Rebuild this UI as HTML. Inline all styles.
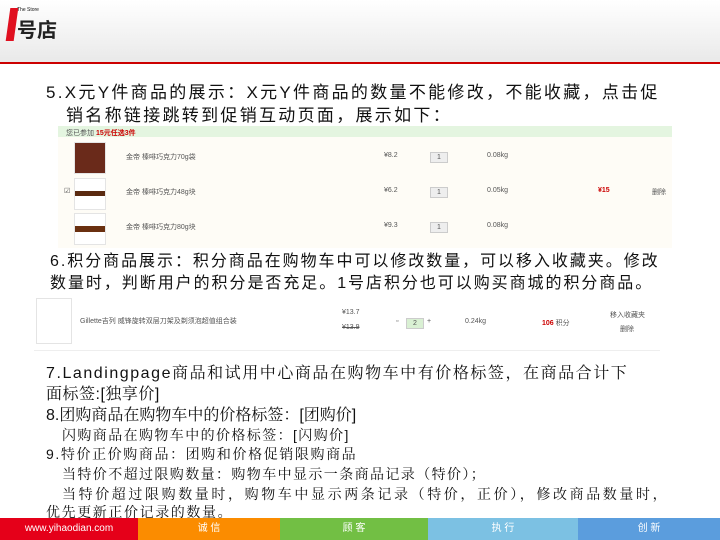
<html><head><style>
body{margin:0;width:720px;height:540px;position:relative;background:#fff;font-family:"Liberation Sans","Noto Sans CJK SC",sans-serif;overflow:hidden}
.a{position:absolute;white-space:nowrap;color:#111}
.sf{font-family:"Liberation Sans","Noto Serif CJK SC",serif}
.s{font-size:7px;color:#555;position:absolute;white-space:nowrap}
.ft{position:absolute;top:518px;height:22px;color:#fff;font-size:10px;text-align:center;line-height:22px}
.im{position:absolute;background:#fff;border:1px solid #e4e4e4;width:30px;height:30px}
.q{position:absolute;width:16px;height:9px;background:#eee;border:1px solid #ccc;font-size:7px;text-align:center;line-height:9px;color:#555}
</style></head><body>
<div style="position:absolute;left:0;top:0;width:720px;height:62px;background:linear-gradient(#fff,#e9e9e9)"></div>
<div style="position:absolute;left:0;top:62px;width:720px;height:2px;background:#c00"></div>
<div style="position:absolute;left:8px;top:8px;width:8px;height:33px;background:#e01020;transform:skewX(-8deg)"></div>
<div class="a" style="left:17px;top:14px;font-size:20px;font-weight:bold;color:#222">号店</div>
<div class="a" style="left:17px;top:7px;font-size:5px">The Store</div>
<div class="a" style="left:46px;top:78px;font-size:17px;letter-spacing:2.3px">5.X元Y件商品的展示：X元Y件商品的数量不能修改，不能收藏，点击促</div>
<div class="a" style="left:66px;top:101px;font-size:17px;letter-spacing:2.3px">销名称链接跳转到促销互动页面，展示如下：</div>
<div style="position:absolute;left:58px;top:126px;width:614px;height:122px;background:#fefcf6"></div>
<div style="position:absolute;left:58px;top:126px;width:614px;height:11px;background:#e4f5e0"></div>
<div class="s" style="left:66px;top:128px">您已参加 <b style="color:#c00">15元任选3件</b></div>
<div class="im" style="left:74px;top:142px;background:#6a2a1a"></div>
<div class="im" style="left:74px;top:178px"><div style="margin-top:12px;height:5px;background:#5a2a10"></div></div>
<div class="im" style="left:74px;top:213px"><div style="margin-top:12px;height:6px;background:#6a3010"></div></div>
<div class="s" style="left:126px;top:152px">金帝 榛啡巧克力70g袋</div>
<div class="s" style="left:126px;top:187px">金帝 榛啡巧克力48g块</div>
<div class="s" style="left:126px;top:222px">金帝 榛啡巧克力80g块</div>
<div class="s" style="left:384px;top:152px">¥8.2</div><div class="s" style="left:384px;top:187px">¥6.2</div><div class="s" style="left:384px;top:222px">¥9.3</div>
<div class="q" style="left:430px;top:152px">1</div><div class="q" style="left:430px;top:187px">1</div><div class="q" style="left:430px;top:222px">1</div>
<div class="s" style="left:487px;top:152px">0.08kg</div><div class="s" style="left:487px;top:187px">0.05kg</div><div class="s" style="left:487px;top:222px">0.08kg</div>
<div class="s" style="left:598px;top:187px;color:#c00;font-weight:bold">¥15</div>
<div class="s" style="left:652px;top:187px">删除</div>
<div class="s" style="left:64px;top:187px">☑</div>
<div class="a" style="left:50px;top:247px;font-size:16px;letter-spacing:1.95px">6.积分商品展示：积分商品在购物车中可以修改数量，可以移入收藏夹。修改</div>
<div class="a" style="left:50px;top:269px;font-size:16px;letter-spacing:1.95px">数量时，判断用户的积分是否充足。1号店积分也可以购买商城的积分商品。</div>
<div class="im" style="left:36px;top:298px;width:34px;height:44px"></div>
<div class="s" style="left:80px;top:316px">Gillette吉列 威锋旋转双层刀架及剃须泡超值组合装</div>
<div class="s" style="left:342px;top:309px">¥13.7</div>
<div class="s" style="left:342px;top:324px;text-decoration:line-through">¥13.9</div>
<div class="s" style="left:396px;top:318px">▫</div>
<div class="q" style="left:406px;top:318px;background:#d9f0d3">2</div>
<div class="s" style="left:427px;top:318px">+</div>
<div class="s" style="left:465px;top:318px">0.24kg</div>
<div class="s" style="left:542px;top:318px"><b style="color:#c00">106</b> 积分</div>
<div class="s" style="left:610px;top:310px">移入收藏夹</div>
<div class="s" style="left:620px;top:324px">删除</div>
<div style="position:absolute;left:34px;top:350px;width:626px;height:1px;background:#eee"></div>
<div class="a sf" style="left:46px;top:360px;font-size:16px;letter-spacing:1.55px">7.Landingpage商品和试用中心商品在购物车中有价格标签，在商品合计下</div>
<div class="a sf" style="left:46px;top:381px;font-size:16px;letter-spacing:0.5px">面标签:[独享价]</div>
<div class="a sf" style="left:46px;top:402px;font-size:16px;letter-spacing:0px">8.团购商品在购物车中的价格标签：[团购价]</div>
<div class="a sf" style="left:62px;top:425px;font-size:14px;letter-spacing:1.4px">闪购商品在购物车中的价格标签：[闪购价]</div>
<div class="a sf" style="left:46px;top:444px;font-size:14px;letter-spacing:1.6px">9.特价正价购商品：团购和价格促销限购商品</div>
<div class="a sf" style="left:62px;top:464px;font-size:14px;letter-spacing:1.4px">当特价不超过限购数量：购物车中显示一条商品记录（特价）；</div>
<div class="a sf" style="left:62px;top:484px;font-size:14px;letter-spacing:2.6px">当特价超过限购数量时，购物车中显示两条记录（特价，正价），修改商品数量时，</div>
<div class="a sf" style="left:46px;top:502px;font-size:14px;letter-spacing:1.6px">优先更新正价记录的数量。</div>
<div class="ft" style="left:0;width:138px;background:#e50019">www.yihaodian.com</div>
<div class="ft" style="left:138px;width:142px;background:#fb8c00">诚 信</div>
<div class="ft" style="left:280px;width:148px;background:#72bf44">顾 客</div>
<div class="ft" style="left:428px;width:150px;background:#7cc1e3">执 行</div>
<div class="ft" style="left:578px;width:142px;background:#5b9ddd">创 新</div>
</body></html>
